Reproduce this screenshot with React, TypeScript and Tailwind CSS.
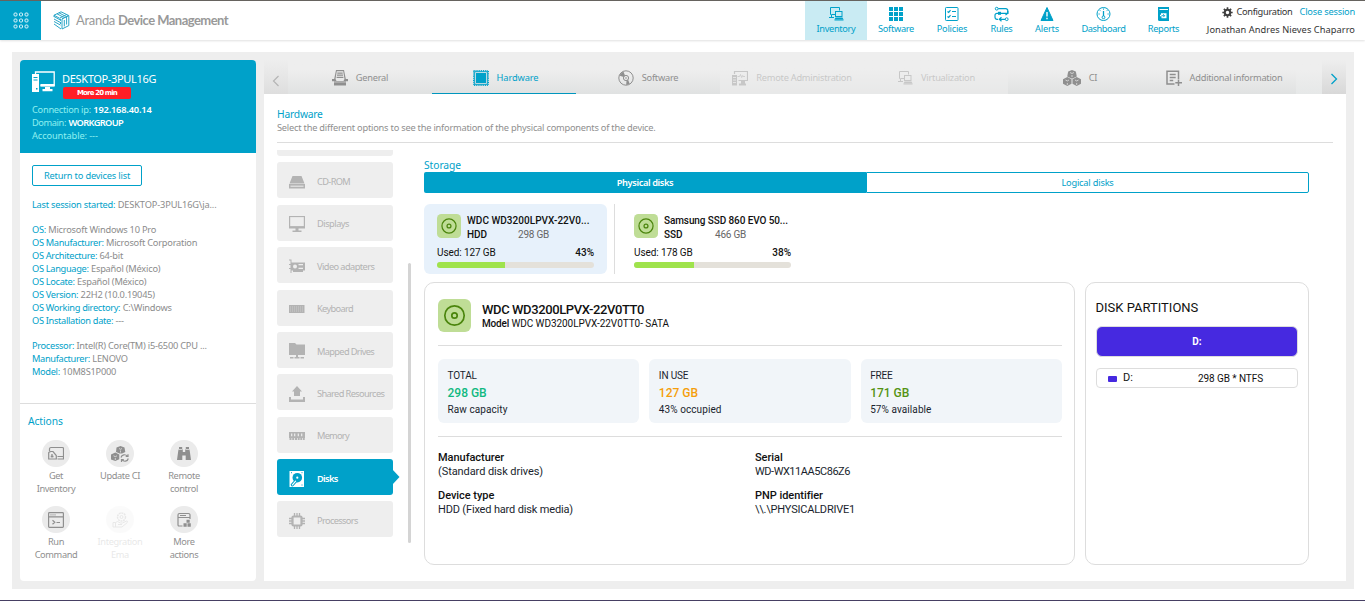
import type { ReactNode } from "react";

type IconProps = { className?: string };

function Svg({ className, box = 24, children }: { className?: string; box?: number; children: ReactNode }) {
  return (
    <svg className={className} viewBox={`0 0 ${box} ${box}`} fill="none" stroke="currentColor">
      {children}
    </svg>
  );
}

/* ---------- brand ---------- */

const AppsIcon = () => (
  <svg className="h-[17px] w-[16px]" viewBox="0 0 16 17" fill="none" stroke="#d9f3fa">
    {[2.5, 8.5, 14.5].map((y) =>
      [2.5, 8, 13.5].map((x) => <rect key={`${x}-${y}`} x={x - 1.5} y={y - 1.5} width="3" height="3" rx="1" />),
    )}
  </svg>
);

const BrandIcon = () => (
  <svg className="h-[19px] w-[17px]" viewBox="0 0 17 19" fill="none" stroke="#2ba6c8" strokeWidth="1">
    <path d="M8 .8 1 4.2l5.500 3 7-3.600M4 2.800l6 3.200M6 1.800l6 3.200M8 .8l7.500 3.600-6.500 3.400" />
    <path d="M1 5.500l6.500 3.600M1 8l6.500 3.600M1 10.500l6.500 3.600M1 13l7 5M1 4.200V6M7.500 7.800v2M7.500 11v2" />
    <path d="M9 8v10l6.800-3.400V4.600L9 8zm2.300 1v6.400M13.600 6v7.500" />
  </svg>
);

/* ---------- header ---------- */

const InventoryIcon = ({ className }: IconProps) => (
  <Svg className={className} box={16}>
    <path d="M3.500 8.500h-1v-7h9v3M1 11.500h5M3.500 8.500H7M3.500 9v2" />
    <rect x="7.500" y="5.500" width="6.500" height="5" />
    <path d="M6.500 13.500h9l-1-2h-7z" fill="currentColor" stroke="none" />
    <path d="M6.500 14h9" />
  </Svg>
);
const GridIcon = ({ className }: IconProps) => (
  <svg className={className} viewBox="0 0 16 16" fill="currentColor">
    {[1, 6, 11].map((y) => [1, 6, 11].map((x) => <rect key={`${x}-${y}`} x={x} y={y} width="4" height="4" />))}
  </svg>
);
const PoliciesIcon = ({ className }: IconProps) => (
  <Svg className={className} box={16}>
    <rect x="1.500" y="1.500" width="12.500" height="13" rx=".8" />
    <path d="M3.500 5.500l1.200 1 1.800-2.300M8 5.500h4M3.500 10.500l1.200 1 1.800-2.300M8 10.500h4" strokeWidth="1.200" />
  </Svg>
);
const RulesIcon = ({ className }: IconProps) => (
  <Svg className={className} box={16}>
    <circle cx="2.700" cy="2.700" r="1.400" />
    <path d="M4.200 2.700h7.600a2 2 0 0 1 2 2v2.600H6M4 13.300H3a2 2 0 0 1-2-2V9.300a2 2 0 0 1 2-2h1" strokeWidth="1.200" />
    <rect x="4" y="5.800" width="3" height="3" fill="currentColor" stroke="none" />
    <path d="M5 13.300h6M7.500 11.300l-2.200 2 2.200 2M11.500 9l2.300-1.700V5" strokeWidth="1.200" />
    <circle cx="12.700" cy="13.200" r="1.400" />
  </Svg>
);
const AlertIcon = ({ className }: IconProps) => (
  <svg className={className} viewBox="0 0 16 16">
    <path d="M8 1.500 14 14.500H2z" fill="currentColor" stroke="currentColor" strokeLinejoin="round" />
    <path d="M8 6v4.500M8 11.700v1.500" stroke="#fff" strokeWidth="1.400" />
  </svg>
);
const DashboardIcon = ({ className }: IconProps) => (
  <Svg className={className} box={16}>
    <circle cx="7.500" cy="8" r="6.500" />
    <path d="M7.500 5v5" strokeWidth="1.300" />
    <circle cx="7.500" cy="11.300" r="1.400" />
    <path d="M7.500 2.500v1.200M3.900 4.300l.8.8M11.300 4.300l-.8.800M2.500 8h1.200M12.700 8h-1.200" />
  </Svg>
);
const ReportsIcon = ({ className }: IconProps) => (
  <svg className={className} viewBox="0 0 16 16">
    <path d="M2 1h11v14H3.500A1.500 1.500 0 0 1 2 13.500z" fill="currentColor" />
    <path d="M3.500 3.500H12" stroke="#fff" />
    <path d="M5 7.200h5.500v5h-5V10.200H4V8.700h1z" fill="#fff" />
    <path d="M5.500 9.700h3M7.200 8.200l1.500 1.500-1.500 1.500" stroke="currentColor" fill="none" strokeWidth=".9" />
  </svg>
);
const GearIcon = () => (
  <svg className="h-[11px] w-[11px] text-[#404040]" viewBox="0 0 16 16" fill="none" stroke="currentColor">
    <circle cx="8" cy="8" r="4" strokeWidth="3" />
    <path d="M8 .5v3M8 12.500v3M.5 8h3M12.500 8h3M2.700 2.700l2.200 2.200M11.100 11.100l2.200 2.200M13.300 2.700l-2.200 2.200M4.900 11.100l-2.200 2.200" strokeWidth="2.400" />
  </svg>
);

/* ---------- device ---------- */

const DesktopIcon = () => (
  <svg className="h-[22px] w-[23px]" viewBox="0 0 23 22" fill="#fff">
    <path d="M0 3h7v18H0z" />
    <path d="M1.500 6.500h4M1.500 9h4" stroke="#00a1c9" />
    <rect x="4" y="17" width="1.500" height="1.500" fill="#00a1c9" />
    <path d="M3.500 3V1h18.700v13.500H8.500" fill="none" stroke="#fff" strokeWidth="1.300" />
    <path d="M8.500 13h14v2.500h-14zM13 16h5v2h-5zM10.500 18h10v2.300h-10z" />
  </svg>
);

/* ---------- tabs ---------- */

const GeneralIcon = ({ className }: IconProps) => (
  <svg className={className} viewBox="0 0 16 16" fill="currentColor">
    <path d="M4 0h8l1.800 9h-1.300L11.200 1.300H4.800L3.500 9H2.200z" />
    <path d="M5.300 2.500h5.400v1.200H5.300zM5 4.600h6v1.200H5zM4.600 6.700h6.800v1.200H4.600z" />
    <path d="M0 9h3.500l1 2h7l1-2H16v2.300h-2V15.500H2V11.300H0z" />
    <path d="M2 12h12" stroke="#eee" strokeWidth=".6" />
  </svg>
);
const ChipIcon = ({ className }: IconProps) => (
  <svg className={className} viewBox="0 0 16 16">
    <rect x=".7" y=".7" width="14.600" height="14.600" fill="none" stroke="currentColor" strokeWidth="1.400" strokeDasharray="1 .85" />
    <rect x="1.700" y="1.700" width="12.600" height="12.600" fill="none" stroke="currentColor" strokeWidth="1" />
    <rect x="3" y="3" width="10" height="10" fill="currentColor" />
  </svg>
);
const DiscIcon = ({ className }: IconProps) => (
  <Svg className={className} box={16}>
    <circle cx="8" cy="8" r="7.200" />
    <circle cx="8" cy="8" r="2.600" />
    <circle cx="8" cy="8" r=".8" fill="currentColor" stroke="none" />
    <path d="M1.200 5.500 5.600 7 7 5.600 5.300 1.300zM8.500 10.600l-.3 4.300 3.500-1-1.500-4z" fill="currentColor" stroke="none" />
  </Svg>
);
const RemoteIcon = ({ className }: IconProps) => (
  <Svg className={className} box={16}>
    <path d="M2.500 4V1.500h13v9H6.500" strokeWidth="1.200" />
    <path d="M5.500 6.500h2l1-2 1.200 3 1-2 .5 1H13" strokeWidth=".8" />
    <path d="M0 5h5v10.500H0zM9 11h4v2.500H9zM7 13.500h7v2H7z" fill="currentColor" stroke="none" />
    <path d="M1 7.500h3M1 10h3M1 12.500h3" stroke="#eee" strokeWidth=".8" />
  </Svg>
);
const CubesIcon = ({ className }: IconProps) => (
  <svg className={className} viewBox="0 0 18 16" fill="currentColor">
    <path d="M9 0l3.800 1.500 1 5L9.500 8.500h-1L4.200 6.500l1-5z" />
    <path d="M4.300 7 8.500 9.200v4.500L4.300 16 0 13.700V9.200z" />
    <path d="M13.700 7 18 9.200v4.500L13.700 16 9.500 13.700V9.200z" />
    <path d="M9 5v2M7 2.500l2 1 2-1M4.300 13v2M2.500 10l1.800 1 1.700-1M13.700 13v2M12 10l1.700 1 1.800-1" stroke="#eee" strokeWidth=".7" fill="none" />
  </svg>
);
const NoteIcon = ({ className }: IconProps) => (
  <Svg className={className} box={16}>
    <path d="M8.500 14H1V1.200h11.500V9M12.500 9.500V16M9.300 12.800H16" strokeWidth="1.500" />
    <path d="M3.700 4.500h6M3.700 7.500h6M3.700 10.500h3.500" strokeWidth="1.300" />
  </Svg>
);

/* ---------- sidebar ---------- */

const CdIcon = ({ className }: IconProps) => (
  <svg className={className} viewBox="0 0 16 16" fill="currentColor">
    <path d="M3.500 2h9l3 7.500H.5zM0 10h16v4.500H0z" />
    <path d="M1.500 12.200h13" stroke="#eee" />
  </svg>
);
const MonitorIcon = ({ className }: IconProps) => (
  <svg className={className} viewBox="0 0 16 16" fill="currentColor">
    <path d="M0 0h16v12.500H0zM6.500 12.500h3v2h-3zM3.500 14.500h9V16h-9z" />
    <path d="M1.200 1.100h13.600v9H1.200z" fill="#eee" />
  </svg>
);
const VideoIcon = ({ className }: IconProps) => (
  <svg className={className} viewBox="0 0 16 16" fill="currentColor">
    <path d="M0 .5h2.500V14H1.500V1.500H0zM2.500 3.500H16v8H2.500zM4 11.500h10V13H4zM0 5h1.500v1H0zM0 9h1.500v1H0z" />
    <circle cx="6" cy="7.500" r="2" fill="#eee" />
    <path d="M9.500 5.700H14M9.500 9.300H14" stroke="#eee" strokeWidth="1.200" />
  </svg>
);
const KeyboardIcon = ({ className }: IconProps) => (
  <svg className={className} viewBox="0 0 16 16" fill="currentColor">
    <rect y="4" width="15.500" height="8" />
    <path d="M1 6h14M1 8h14M1 10h14" stroke="#eee" strokeWidth=".4" strokeDasharray="1 1" />
  </svg>
);
const FolderNetIcon = ({ className }: IconProps) => (
  <svg className={className} viewBox="0 0 16 16" fill="currentColor">
    <path d="M0 0h6l1.500 1.500H16V12H0zM7 12h2v2H7zM1 14h3.500v1.600H1zM5.500 14h5v1.600h-5zM11.500 14H15v1.600h-3.500z" />
  </svg>
);
const ShareIcon = ({ className }: IconProps) => (
  <svg className={className} viewBox="0 0 16 16" fill="currentColor">
    <path d="M8 0l5 5.500h-2V10H5V5.500H3zM0 11h2v2.500h12V11h2v5H0z" />
  </svg>
);
const MemoryIcon = ({ className }: IconProps) => (
  <svg className={className} viewBox="0 0 16 16" fill="currentColor">
    <path d="M0 4h16v6H0zM.5 10h2v2h-2zM3.200 10h2v2h-2zM6 10h2v2H6zM8.700 10h2v2h-2zM11.300 10h2v2h-2zM14 10h1.700v2H14z" />
    <path d="M2.700 5.500v2.700M5.700 5.500v2.700M9.300 5.500v2.700M12.700 5.500v2.700" stroke="#eee" strokeWidth="1.200" />
  </svg>
);
const DiskIcon = ({ className }: IconProps) => (
  <svg className={className} viewBox="0 0 16 16">
    <rect x=".5" width="14.500" height="16" fill="#fff" />
    <circle cx="8.300" cy="6.700" r="4.800" fill="#00a1c9" />
    <circle cx="8.300" cy="6.700" r="1.100" fill="#fff" />
    <path d="M3.400 13.800l3.600-4" stroke="#00a1c9" strokeWidth="3.200" strokeLinecap="round" />
    <path d="M3.400 13.800l3.200-3.600" stroke="#fff" strokeWidth="1.200" strokeLinecap="round" />
    <path d="M12.500 14h1M12.500 1.700h1M2 1.700h1" stroke="#00a1c9" />
  </svg>
);
const CpuIcon = ({ className }: IconProps) => (
  <Svg className={className} box={16}>
    <rect x="3.500" y="3.500" width="9" height="9" rx="1" strokeWidth="2.200" />
    <path d="M5.500 0v3M8 0v3M10.500 0v3M5.500 13v3M8 13v3M10.500 13v3M0 5.500h3M0 8h3M0 10.500h3M13 5.500h3M13 8h3M13 10.500h3" strokeWidth="1.300" />
  </Svg>
);

/* ---------- actions ---------- */

const GetInventoryIcon = ({ className }: IconProps) => (
  <Svg className={className} box={16}>
    <path d="M1.500 5.500V3a1.500 1.500 0 0 1 1.500-1.500H14.500a1 1 0 0 1 1 1V10.500H9.500M15.500 10.500v2.500h-6" strokeWidth="1.200" />
    <path d="M.700 13V6.500l2-1 2.300 0 3.300 4V13z" strokeWidth="1.200" />
    <path d="M4 8v3.500M2.700 10.500h2.800" strokeWidth="1.300" />
  </Svg>
);
const UpdateIcon = ({ className }: IconProps) => (
  <svg className={className} viewBox="0 0 18 16" fill="currentColor">
    <path d="M9.500 0l4 1.500.8 4.500L11 7.500H8.500L5 6l.5-4.500zM4.300 6.500l4 2v4.800l-4 1.700L0 13.500V8.500z" />
    <path d="M9.500 4.500v2M8 2.500l1.500.8 1.500-.8M4.300 12v2M2.500 9.800l1.800.9 1.700-.9" stroke="#eee" strokeWidth=".7" fill="none" />
    <path d="M10 11.500a3.500 3.500 0 0 1 6.300-1.200M17 8.200v2.300h-2.300M17.300 12.500a3.500 3.500 0 0 1-6.300 1.200M10.500 15.900v-2.300h2.300" stroke="currentColor" fill="none" strokeWidth="1.200" />
  </svg>
);
const BinocularsIcon = ({ className }: IconProps) => (
  <svg className={className} viewBox="0 0 16 16" fill="currentColor">
    <path d="M3 1h3.200v2l.6 1v2h2.400V4l.6-1V1H13v2l.7 1.500L15 14H9.700V9.500H6.300V14H1l1.300-9.500L3 3z" />
    <path d="M3 3.500h3.200M9.800 3.500H13" stroke="#eee" strokeWidth=".7" />
  </svg>
);
const TerminalIcon = ({ className }: IconProps) => (
  <Svg className={className} box={16}>
    <rect x=".6" y=".6" width="14.800" height="14.800" rx=".8" strokeWidth="1.200" />
    <path d="M1 4.800h14M2.500 2.800h1M4.500 2.800h1M6.500 2.800h1M4.500 8.200l2.300 2-2.300 2M8.500 10.500h3.500" strokeWidth="1.200" />
  </Svg>
);
const IntegrationIcon = ({ className }: IconProps) => (
  <Svg className={className} box={16}>
    <circle cx="9.500" cy="5" r="4" strokeDasharray="2 .6" strokeWidth="1.500" />
    <circle cx="9.500" cy="5" r="1.500" />
    <path d="M1 10.500h2.500l2-1 3 1.500h2L15 8.800c1 .5.500 1.500 0 2L10 15H1zM3.500 10.500V15M6 12.500h4" />
  </Svg>
);
const MoreIcon = ({ className }: IconProps) => (
  <Svg className={className} box={16}>
    <path d="M6.500 14H3a1 1 0 0 1-1-1V3a1.500 1.500 0 0 1 1.500-1.500h9A1.500 1.500 0 0 1 14 3v4M2 5.500h12M4 3.500h6" strokeWidth="1.200" />
    <path d="M10.500 7.700h3.200v3h-3.200zM7.500 11.300h3.200v3.400H7.500zM11.500 11.300h3.300v3.400h-3.300z" fill="currentColor" stroke="none" />
  </Svg>
);

function DiscBadge({ className }: IconProps) {
  return (
    <svg className={className} viewBox="0 0 33 33">
      <rect width="33" height="33" rx="6" fill="#bfdd96" />
      <circle cx="16.500" cy="16.500" r="9.700" fill="none" stroke="#4b850d" strokeWidth="1.700" />
      <circle cx="16.500" cy="16.500" r="2.700" fill="none" stroke="#4b850d" strokeWidth="1.700" />
    </svg>
  );
}

/* ---------- data ---------- */

const nav = [
  { label: "Inventory", Icon: InventoryIcon, box: "w-[62px] bg-[#c9ebf3]", text: "tracking-[-0.33px]" },
  { label: "Software", Icon: GridIcon, box: "w-[58px]", text: "tracking-[-0.32px]" },
  { label: "Policies", Icon: PoliciesIcon, box: "w-[54px]", text: "tracking-[-0.25px]" },
  { label: "Rules", Icon: RulesIcon, box: "w-[45px]", text: "tracking-[-0.3px]" },
  { label: "Alerts", Icon: AlertIcon, box: "w-[46px]", text: "tracking-[-0.2px]" },
  { label: "Dashboard", Icon: DashboardIcon, box: "w-[67px]", text: "tracking-[-0.42px]" },
  { label: "Reports", Icon: ReportsIcon, box: "w-[53px]", text: "tracking-[-0.35px]" },
];

const osInfo = [
  ["OS:", "Microsoft Windows 10 Pro"],
  ["OS Manufacturer:", "Microsoft Corporation"],
  ["OS Architecture:", "64-bit"],
  ["OS Language:", "Español (México)"],
  ["OS Locate:", "Español (México)"],
  ["OS Version:", "22H2 (10.0.19045)"],
  ["OS Working directory:", "C:\\Windows"],
  ["OS Installation date:", "---"],
];
const hwInfo = [
  ["Processor:", "Intel(R) Core(TM) i5-6500 CPU ..."],
  ["Manufacturer:", "LENOVO"],
  ["Model:", "10M8S1P000"],
];

const actions = [
  { lines: ["Get", "Inventory"], Icon: GetInventoryIcon },
  { lines: ["Update CI"], Icon: UpdateIcon, icon: "w-[18px]" },
  { lines: ["Remote", "control"], Icon: BinocularsIcon },
  { lines: ["Run", "Command"], Icon: TerminalIcon },
  { lines: ["Integration", "Ema"], Icon: IntegrationIcon, off: true },
  { lines: ["More", "actions"], Icon: MoreIcon },
];

const tabs = [
  { label: "General", Icon: GeneralIcon },
  { label: "Hardware", Icon: ChipIcon, active: true },
  { label: "Software", Icon: DiscIcon },
  { label: "Remote Administration", Icon: RemoteIcon, off: true },
  { label: "Virtualization", Icon: InventoryIcon, off: true },
  { label: "CI", Icon: CubesIcon, icon: "w-[18px]" },
  { label: "Additional information", Icon: NoteIcon },
];

const components = [
  { label: "CD-ROM", Icon: CdIcon, text: "tracking-[-0.65px]" },
  { label: "Displays", Icon: MonitorIcon, text: "tracking-[-0.5px]" },
  { label: "Video adapters", Icon: VideoIcon, text: "tracking-[-0.58px]" },
  { label: "Keyboard", Icon: KeyboardIcon, text: "tracking-[-0.65px]" },
  { label: "Mapped Drives", Icon: FolderNetIcon, text: "tracking-[-0.65px]" },
  { label: "Shared Resources", Icon: ShareIcon, text: "tracking-[-0.63px]" },
  { label: "Memory", Icon: MemoryIcon, text: "tracking-[-0.75px]" },
  { label: "Disks", Icon: DiskIcon, text: "tracking-[-0.65px]", active: true },
  { label: "Processors", Icon: CpuIcon, text: "tracking-[-0.65px]" },
];

const disks = [
  { name: "WDC WD3200LPVX-22V0...", kind: "HDD", size: "298 GB", used: "Used: 127 GB", pct: 43, active: true, text: "tracking-[0.03px]" },
  { name: "Samsung SSD 860 EVO 50...", kind: "SSD", size: "466 GB", used: "Used: 178 GB", pct: 38, text: "tracking-[-0.1px]" },
];

const stats = [
  { title: "TOTAL", value: "298 GB", note: "Raw capacity", color: "text-[#10b981]" },
  { title: "IN USE", value: "127 GB", note: "43% occupied", color: "text-[#f59e0b]" },
  { title: "FREE", value: "171 GB", note: "57% available", color: "text-[#559314]" },
];

const details = [
  ["Manufacturer", "(Standard disk drives)", "tracking-[-0.08px]"],
  ["Serial", "WD-WX11AA5C86Z6", "tracking-[-0.46px]"],
  ["Device type", "HDD (Fixed hard disk media)", "tracking-[-0.16px]"],
  ["PNP identifier", "\\\\.\\PHYSICALDRIVE1", "tracking-[-0.21px]"],
];

/* ---------- sections ---------- */

function Header() {
  return (
    <header className="flex h-10 border-t border-[#66635f] bg-white shadow-[0_1px_2px_rgba(0,0,0,0.12)]">
      <div className="flex w-[41px] items-center justify-center bg-[#00a1c9]">
        <AppsIcon />
      </div>
      <div className="flex flex-1 items-center pl-3">
        <BrandIcon />
        <span className="ml-[6px] font-['Lato',sans-serif] text-[13px] tracking-[-0.31px] text-[#999]">Aranda</span>
        <span className="ml-[3px] font-['Lato',sans-serif] text-[13px] font-bold tracking-[-0.54px] text-[#999]">Device Management</span>
      </div>
      <nav className="flex text-[#00a1c9]">
        {nav.map(({ label, Icon, box, text }) => (
          <div key={label} className={`flex flex-col items-center pt-[5px] text-[9.25px] leading-[13px] ${box}`}>
            <Icon className="h-4 w-4" />
            <span className={text}>{label}</span>
          </div>
        ))}
      </nav>
      <div className="w-[175px] pr-[10px] pt-1 text-right text-[9.25px] leading-[14px] text-[#333]">
        <div className="flex items-center justify-end">
          <GearIcon />
          <span className="ml-[3px] tracking-[-0.3px]">Configuration</span>
          <span className="ml-[7px] tracking-[-0.2px] text-[#00a1c9]">Close session</span>
        </div>
        <div className="mt-1 whitespace-nowrap tracking-[0.06px]">Jonathan Andres Nieves Chaparro</div>
      </div>
    </header>
  );
}

function InfoRow({ row }: { row: string[] }) {
  return (
    <div className="whitespace-nowrap">
      <span className="tracking-[-0.32px] text-[#00a1c9]">{row[0]}</span>{" "}
      <span className="tracking-[-0.22px] text-[#8c8c8c]">{row[1]}</span>
    </div>
  );
}

function DeviceCard() {
  return (
    <aside className="flex w-[236px] flex-col overflow-hidden rounded bg-white text-[9.25px] leading-[13px]">
      <div className="h-[93px] bg-[#00a1c9] pl-3 pt-[11px]">
        <div className="flex">
          <DesktopIcon />
          <div className="ml-2">
            <div className="-ml-px text-[11px] leading-4 tracking-[-0.33px] text-white">DESKTOP-3PUL16G</div>
            <div className="h-3 w-[68px] rounded-[2px] bg-[#ff1d25] text-center font-['DejaVu_Sans',sans-serif] text-[7px] font-bold leading-[13px] tracking-[-0.84px] text-white">
              More 20 min
            </div>
          </div>
        </div>
        <div className="mt-1 text-[#8ff0f0]">
          <div><span className="tracking-[-0.26px]">Connection ip:</span> <span className="font-semibold tracking-[-0.18px] text-white">192.168.40.14</span></div>
          <div><span className="tracking-[-0.4px]">Domain:</span> <span className="font-semibold tracking-[-0.62px] text-white">WORKGROUP</span></div>
          <div className="tracking-[-0.1px]">Accountable: ---</div>
        </div>
      </div>
      <div className="h-[251px] border-b border-[#ddd] pl-3 pt-3">
        <div className="h-[21px] w-[110px] rounded-[2px] border border-[#00a1c9] text-center leading-[19px] tracking-[-0.18px] text-[#00a1c9]">
          Return to devices list
        </div>
        <div className="mt-3 whitespace-nowrap">
          <span className="tracking-[-0.24px] text-[#00a1c9]">Last session started:</span>{" "}
          <span className="tracking-[-0.14px] text-[#8c8c8c]">DESKTOP-3PUL16G\ja...</span>
        </div>
        <div className="mt-3">{osInfo.map((r) => <InfoRow key={r[0]} row={r} />)}</div>
        <div className="mt-3">{hwInfo.map((r) => <InfoRow key={r[0]} row={r} />)}</div>
      </div>
      <div className="pt-[11px]">
        <div className="pl-2 text-[10.25px] leading-[13px] tracking-[-0.05px] text-[#00a1c9]">Actions</div>
        <div className="ml-1 mt-3 grid w-48 grid-cols-3 gap-y-[10px] text-center tracking-[-0.37px] text-[#8f8f8f]">
          {actions.map(({ lines, Icon, off, icon }) => (
            <div key={lines[0]} className={`flex h-14 flex-col items-center ${off ? "opacity-20" : ""}`}>
              <div className="mb-[2px] flex h-[27px] w-7 items-center justify-center rounded-full bg-[#ebebeb]">
                <Icon className={`h-4 text-[#8f8f8f] ${icon ?? "w-4"}`} />
              </div>
              {lines.map((l) => <div key={l}>{l}</div>)}
            </div>
          ))}
        </div>
      </div>
    </aside>
  );
}

function TabBar() {
  return (
    <div className="flex h-[34px] bg-[#eee] text-[9.25px] text-[#8f8f8f]">
      <div className="flex w-6 items-center justify-center bg-linear-to-b from-[#eee] to-[#dedede] pt-2">
        <svg className="h-3 w-3" viewBox="0 0 12 12" fill="none" stroke="#b5b5b5" strokeWidth="1.200"><path d="M8.500 1 3.500 6l5 5" /></svg>
      </div>
      {tabs.map(({ label, Icon, active, off, icon }) => (
        <div
          key={label}
          className={`flex w-36 items-center justify-center whitespace-nowrap bg-linear-to-b from-[#eee] from-30% to-[#e0e2e2] pt-[2px] ${
            active ? "border-b border-[#0096be] pl-[3px] text-[#00a1c9]" : ""
          } ${off ? "opacity-40" : ""}`}
        >
          <Icon className={`mr-2 h-4 shrink-0 ${icon ?? "w-4"}`} />
          <span className={active ? "tracking-[-0.1px]" : "tracking-[-0.25px]"}>{label}</span>
        </div>
      ))}
      <div className="w-[26px] bg-linear-to-b from-[#eee] from-30% to-[#e6e8e8]" />
      <div className="flex w-6 items-center justify-center bg-linear-to-b from-[#eee] to-[#d8d8d8] pt-1">
        <svg className="h-3 w-3" viewBox="0 0 12 12" fill="none" stroke="#00a1c9" strokeWidth="1.300"><path d="M3.500 1l5 5-5 5" /></svg>
      </div>
    </div>
  );
}

function ComponentMenu() {
  return (
    <div className="flex h-[431px] w-[147px] pt-[7px] text-[9.25px]">
      <div className="flex w-[116px] flex-col gap-[6.375px]">
        <div className="h-[6.07px] shrink-0 rounded-b-[3px] bg-[#eee]" />
        {components.map(({ label, Icon, text, active }) => (
          <div
            key={label}
            className={`relative flex h-9 shrink-0 items-center rounded-[3px] pl-3 pt-[3px] ${
              active ? "bg-[#00a1c9] text-white" : "bg-[#eee] text-[#b3b3b3]"
            }`}
          >
            <Icon className="h-4 w-4" />
            <span className={`ml-3 ${text} ${active ? "font-semibold" : ""}`}>{label}</span>
            {active && (
              <svg className="absolute -right-[7px] top-[9px] h-[18px] w-2" viewBox="0 0 8 18" fill="#00a1c9"><path d="M0 1l7.500 8L0 17z" /></svg>
            )}
          </div>
        ))}
      </div>
      <div className="ml-[15px] mt-[113px] h-[280px] w-[3px] rounded-full bg-[#d4d4d4]" />
    </div>
  );
}

function DiskSelector() {
  return (
    <div className="mt-[11px] flex h-[70px]">
      {disks.map((d) => (
        <div key={d.name} className={`w-[183px] rounded-md pl-[13px] pt-[10px] text-[10px] ${d.active ? "bg-[#e7f1fb]" : "ml-[6px]"}`}>
          <div className="flex">
            <DiscBadge className="h-6 w-6 shrink-0" />
            <div className="ml-[6px] whitespace-nowrap font-medium leading-[14px]">
              <div className={d.text}>{d.name}</div>
              <div className="flex">
                <span className="w-[51px]">{d.kind}</span>
                <span className="font-normal tracking-[-0.23px] text-[#666]">{d.size}</span>
              </div>
            </div>
          </div>
          <div className="mt-1 flex w-[157px] justify-between leading-[14px]">
            <span className="tracking-[-0.1px]">{d.used}</span>
            <span className="font-medium">{d.pct}%</span>
          </div>
          <div className="mt-[2px] h-[6px] w-[157px] overflow-hidden rounded-full bg-[#e4e1da]">
            <div className="h-full bg-[#9fe34c]" style={{ width: `${d.pct}%` }} />
          </div>
        </div>
      )).flatMap((el, i) => (i === 0 ? [el, <div key="sep" className="ml-[7px] w-px bg-[#ddd]" />] : [el]))}
    </div>
  );
}

function DiskDetail() {
  return (
    <div className="h-[283px] w-[651px] rounded-[10px] border border-[#ddd] pl-[13px] pr-3 pt-4">
      <div className="flex h-[47px] border-b border-[#ddd]">
        <DiscBadge className="h-[33px] w-[33px]" />
        <div className="ml-[11px] pt-[3px]">
          <div className="text-[13px] font-medium leading-4 tracking-[-0.4px]">WDC WD3200LPVX-22V0TT0</div>
          <div className="text-[10px] leading-3 tracking-[-0.06px]"><span className="font-medium tracking-[-0.19px]">Model</span> WDC WD3200LPVX-22V0TT0- SATA</div>
        </div>
      </div>
      <div className="mt-[13px] grid grid-cols-3 gap-[10px]">
        {stats.map((s) => (
          <div key={s.title} className="h-16 rounded-md bg-[#f1f5f9] pl-[9.5px] pt-2 text-[10px] leading-[17px] text-[#1a1f2e]">
            <div className="tracking-[-0.15px]">{s.title}</div>
            <div className={`pt-px text-[12px] font-medium leading-4 ${s.color}`}>{s.value}</div>
            <div className="tracking-[0.08px]">{s.note}</div>
          </div>
        ))}
      </div>
      <div className="mt-[13px] grid grid-cols-[317px_1fr] gap-y-[9px] border-t border-[#ddd] pt-[13.5px] text-[11px] leading-[14.5px]">
        {details.map(([k, v, t]) => (
          <div key={k}>
            <div className="font-medium tracking-[-0.04px]">{k}</div>
            <div className={`text-[#1a1f2e] ${t}`}>{v}</div>
          </div>
        ))}
      </div>
    </div>
  );
}

function Partitions() {
  return (
    <div className="ml-[10px] h-[283px] w-[224px] rounded-[10px] border border-[#ddd] px-[10px] pt-[17px]">
      <div className="-ml-[0.5px] text-[13px] leading-4">DISK PARTITIONS</div>
      <div className="mt-[10px] flex h-[31px] items-center justify-center rounded-md border border-[#ddd] bg-[#4629e0] text-[10px] font-bold text-white">D:</div>
      <div className="mt-[11px] flex h-5 items-center rounded border border-[#ddd] pl-[11px] pt-px text-[11px]">
        <span className="h-[6px] w-[9px] rounded-[1px] bg-[#4629e0]" />
        <span className="ml-[6px] w-[75px]">D:</span>
        <span className="text-[10px] tracking-[-0.08px]">298 GB * NTFS</span>
      </div>
    </div>
  );
}

export default function App() {
  return (
    <div className="flex h-[601px] w-[1365px] flex-col overflow-hidden border-b border-[#463f63] bg-white font-['Noto_Sans',sans-serif]">
      <Header />
      <div className="ml-3 mt-3 flex h-[537px] w-[1342px] gap-2 bg-[#eee] p-2">
        <DeviceCard />
        <main className="w-[1082px] bg-white">
          <TabBar />
          <div className="px-[13px]">
            <div className="h-[49px] border-b border-[#ddd] pt-[13px]">
              <div className="text-[10.25px] leading-[14px] tracking-[-0.2px] text-[#00a1c9]">Hardware</div>
              <div className="text-[9.25px] leading-[14px] tracking-[-0.22px] text-[#8f8f8f]">
                Select the different options to see the information of the physical components of the device.
              </div>
            </div>
            <div className="flex">
              <ComponentMenu />
              <section className="w-[885px] pt-4 font-['Roboto',sans-serif] text-[#111]">
                <div className="font-['Noto_Sans',sans-serif] text-[10.25px] leading-[13px] tracking-[-0.05px] text-[#00a1c9]">Storage</div>
                <div className="flex h-[21px] text-center font-['Noto_Sans',sans-serif] text-[9.25px]">
                  <div className="w-[442px] rounded-l-[2px] bg-[#00a1c9] font-semibold leading-[21px] tracking-[-0.38px] text-white">Physical disks</div>
                  <div className="flex-1 rounded-r-[2px] border border-[#00a1c9] leading-[19px] tracking-[-0.2px] text-[#00a1c9]">Logical disks</div>
                </div>
                <DiskSelector />
                <div className="mt-2 flex">
                  <DiskDetail />
                  <Partitions />
                </div>
              </section>
            </div>
          </div>
        </main>
      </div>
    </div>
  );
}
